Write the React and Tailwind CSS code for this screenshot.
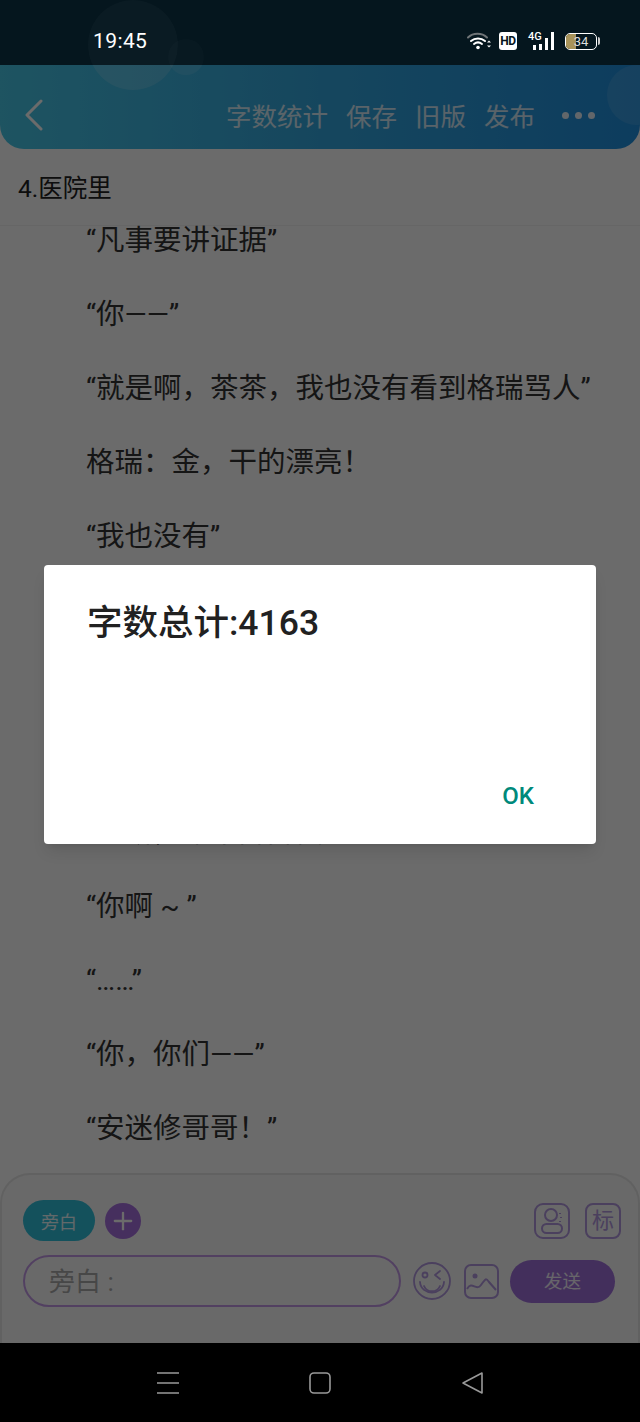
import { Plus } from 'lucide-react'

const cjk = "font-['Roboto','Noto_Sans_CJK_SC',sans-serif]"

const lines = [
  '“凡事要讲证据”',
  '“你——”',
  '“就是啊，茶茶，我也没有看到格瑞骂人”',
  '格瑞：金，干的漂亮！',
  '“我也没有”',
  '\u00a0',
  '\u00a0',
  '\u00a0',
  '“卫斯，你不问问我吗',
  '“你啊 ~ ”',
  '“……”',
  '“你，你们——”',
  '“安迷修哥哥！”',
]

const actions = ['字数统计', '保存', '旧版', '发布']

function WifiIcon() {
  return (
    <svg width="24" height="20" viewBox="0 0 24 20" fill="none" strokeLinecap="round">
      <path d="M1 6.5C6 1.5 15 1.5 20 6.5" stroke="#6f7477" strokeWidth="2" />
      <path d="M4 10C8 6.5 14 6.5 18 10" stroke="white" strokeWidth="2" />
      <path d="M7 13C9.5 11 12.5 11 15 13" stroke="white" strokeWidth="2" />
      <circle cx="11" cy="16.5" r="1.8" fill="white" />
      <path d="M20 11.5l2-2 2 2zM20 14.5l2 2 2-2z" fill="white" />
    </svg>
  )
}

function SignalIcon() {
  return (
    <div className="relative flex h-[18px] w-[26px] items-end justify-end gap-[3px]">
      <span className="absolute left-0 top-[-1px] font-['Roboto',sans-serif] text-[11px] font-medium leading-[11px] text-white">4G</span>
      <span className="h-[5px] w-[3px] bg-white" />
      <span className="h-[6px] w-[3px] bg-white" />
      <span className="h-[12px] w-[3px] bg-white" />
      <span className="h-[18px] w-[3px] bg-white" />
    </div>
  )
}

function StatusBar() {
  return (
    <div className="relative flex h-[65px] items-center justify-between overflow-hidden bg-[#05161e] pl-[93px] pr-[40px] pt-[19px] text-white">
      {/* the header bubbles carry on faintly up here */}
      <span className="absolute left-[88px] top-0 h-[90px] w-[90px] rounded-full bg-white/[0.025]" />
      <span className="absolute left-[168px] top-[39px] h-[36px] w-[36px] rounded-full bg-white/[0.015]" />
      <span className="relative font-['Roboto',sans-serif] text-[21px] tracking-[0.4px]">19:45</span>
      <div className="relative mb-[2px] flex items-center">
        <WifiIcon />
        <span className="ml-[8px] grid h-[18px] w-[18px] place-items-center rounded-[3px] bg-white font-['Roboto',sans-serif] text-[12px] font-bold tracking-[-0.5px] text-[#05141c]">HD</span>
        <div className="ml-[11px]"><SignalIcon /></div>
        <div className="relative ml-[11px] flex h-[17px] w-[32px] items-center justify-center overflow-hidden rounded-[5px] border-[1.5px] border-white">
          <span className="absolute inset-y-0 left-0 w-[10px] bg-[#a8935a]" />
          <span className="relative font-['Roboto',sans-serif] text-[13px] leading-none text-[#ddd]">34</span>
        </div>
        <span className="ml-[1px] h-[8px] w-[2px] rounded-r bg-[#ccc]" />
      </div>
    </div>
  )
}

function Header() {
  return (
    <div className="relative flex h-[84px] items-center overflow-hidden rounded-b-[24px] bg-gradient-to-r from-[#48c8e8] via-[#34a8e0] to-[#2090e0] pl-[24px] pr-[45px] pt-[16px]">
      {/* soft bubbles behind the actions */}
      <span className="absolute left-[88px] top-[-65px] h-[90px] w-[90px] rounded-full bg-white/15" />
      <span className="absolute left-[168px] top-[-26px] h-[36px] w-[36px] rounded-full bg-white/10" />
      <span className="absolute left-[607px] top-0 h-[60px] w-[60px] rounded-full bg-white/10" />
      <svg className="relative" width="20" height="32" viewBox="0 0 20 32" fill="none" stroke="white" strokeWidth="3" strokeLinecap="round" strokeLinejoin="round">
        <path d="M17 2L3 16L17 30" />
      </svg>
      <div className="relative ml-auto flex items-center gap-[18px] font-['Noto_Sans_CJK_SC',sans-serif] text-[25.5px] leading-none text-white/80">
        {actions.map((a) => (
          <span key={a} className="whitespace-nowrap">{a}</span>
        ))}
      </div>
      <div className="relative ml-[27px] flex gap-[6px]">
        <span className="h-[7px] w-[7px] rounded-full bg-white/90" />
        <span className="h-[7px] w-[7px] rounded-full bg-white/90" />
        <span className="h-[7px] w-[7px] rounded-full bg-white/90" />
      </div>
    </div>
  )
}

function Article() {
  return (
    <div className={`flex-1 overflow-hidden ${cjk}`}>
      <div className="h-[77px] border-b border-[#f4f4f4] pl-[18px] pt-[24px] text-[24.5px] leading-[32px] text-[#222]">4.医院里</div>
      <div className="-mt-[5px] flex flex-col gap-[34px] pl-[86px] text-[28.5px] leading-[40px] text-[#333]">
        {lines.map((l, i) => (
          <div key={i} className="whitespace-nowrap">{l}</div>
        ))}
      </div>
    </div>
  )
}

function Composer() {
  return (
    <div className={`h-[170px] shrink-0 rounded-t-[30px] border-x-2 border-t-2 border-[#e8e8e8] bg-[#fafafa] pl-[21px] pr-[17px] pt-[25px] ${cjk}`}>
      <div className="flex items-center">
        <span className="grid h-[41px] w-[72px] place-items-center rounded-full bg-[#30c0dc] pt-[3px] text-[18px] text-white/90">旁白</span>
        <span className="ml-[10px] grid h-[36px] w-[36px] place-items-center rounded-full bg-[#a870e0]">
          <Plus className="h-[28px] w-[28px] text-white" strokeWidth={2} />
        </span>
        <svg className="ml-auto" width="36" height="36" viewBox="0 0 36 36" fill="none" stroke="#b298e0" strokeWidth="2">
          <rect x="1" y="1" width="34" height="34" rx="8" />
          <circle cx="17" cy="12" r="6" />
          <rect x="8" y="21" width="20" height="9" rx="4.5" />
          <path d="M26 10v1M27 14v1M26 18v1" />
        </svg>
        <span className="ml-[15px] grid h-[36px] w-[36px] place-items-center rounded-[8px] border-2 border-[#b298e0] text-[22px] leading-none text-[#b298e0]">标</span>
      </div>
      <div className="mt-[14px] flex items-center">
        <div className="flex h-[52px] w-[378px] items-center rounded-full border-2 border-[#c49ae8] pl-[24px] pt-[3px] text-[26px] text-[#aaa]">旁白 :</div>
        <svg className="ml-[12px]" width="38" height="38" viewBox="0 0 38 38" fill="none" stroke="#b298e0" strokeWidth="1.8" strokeLinecap="round" strokeLinejoin="round">
          <circle cx="19" cy="19" r="18" />
          <circle cx="12" cy="13" r="2.5" />
          <path d="M27 9l-5 4 5 4" />
          <path d="M7 20c1 14 23 14 24 0" />
          <path d="M11 24c3 7 13 7 16 0" />
        </svg>
        <svg className="ml-[13px]" width="35" height="35" viewBox="0 0 35 35" fill="none" stroke="#b298e0" strokeWidth="2" strokeLinejoin="round">
          <rect x="1" y="1" width="33" height="33" rx="6" />
          <circle cx="11" cy="12" r="2.5" fill="#b298e0" stroke="none" />
          <path d="M3 25c5-9 9 3 14-4s5-7 8-3l7 8" />
        </svg>
        <span className="ml-[11px] grid h-[43px] w-[105px] place-items-center rounded-full bg-[#a070dc] pt-[4px] text-[18.5px] text-white/90">发送</span>
      </div>
    </div>
  )
}

function NavBar() {
  return (
    <div className="relative flex h-[79px] shrink-0 items-center bg-black">
      <svg className="absolute left-[156px] top-[28px]" width="24" height="24" viewBox="0 0 24 24" stroke="#999" strokeWidth="1.6">
        <path d="M1 2h22M1 12h22M1 22h22" />
      </svg>
      <svg className="absolute left-[308px] top-[28px]" width="24" height="24" viewBox="0 0 24 24" fill="none" stroke="#999" strokeWidth="1.6">
        <rect x="2" y="2" width="20" height="20" rx="4" />
      </svg>
      <svg className="absolute left-[461px] top-[28px]" width="24" height="24" viewBox="0 0 24 24" fill="none" stroke="#999" strokeWidth="1.6" strokeLinejoin="round">
        <path d="M21 2v20L2 12z" />
      </svg>
    </div>
  )
}

export default function App() {
  return (
    <div className="relative flex h-[1422px] w-[640px] flex-col overflow-hidden bg-white">
      <StatusBar />
      <Header />
      <Article />
      <Composer />
      <NavBar />

      {/* modal scrim (leaves the system bars alone) and word count dialog */}
      <div className="absolute inset-x-0 bottom-[79px] top-[65px] bg-black/[0.58]" />
      <div className="absolute left-[44px] top-[565px] flex h-[279px] w-[552px] flex-col rounded-[4px] bg-white pl-[43px] pr-[44px] shadow-lg">
        <div className={`mt-[36px] text-[35.5px] font-medium leading-[44px] text-[#212121] ${cjk}`}>字数总计:4163</div>
        <button className="mb-[31px] ml-auto mr-[18px] mt-auto font-['Roboto',sans-serif] text-[24px] font-medium leading-[34px] text-[#00897b]">OK</button>
      </div>
    </div>
  )
}
